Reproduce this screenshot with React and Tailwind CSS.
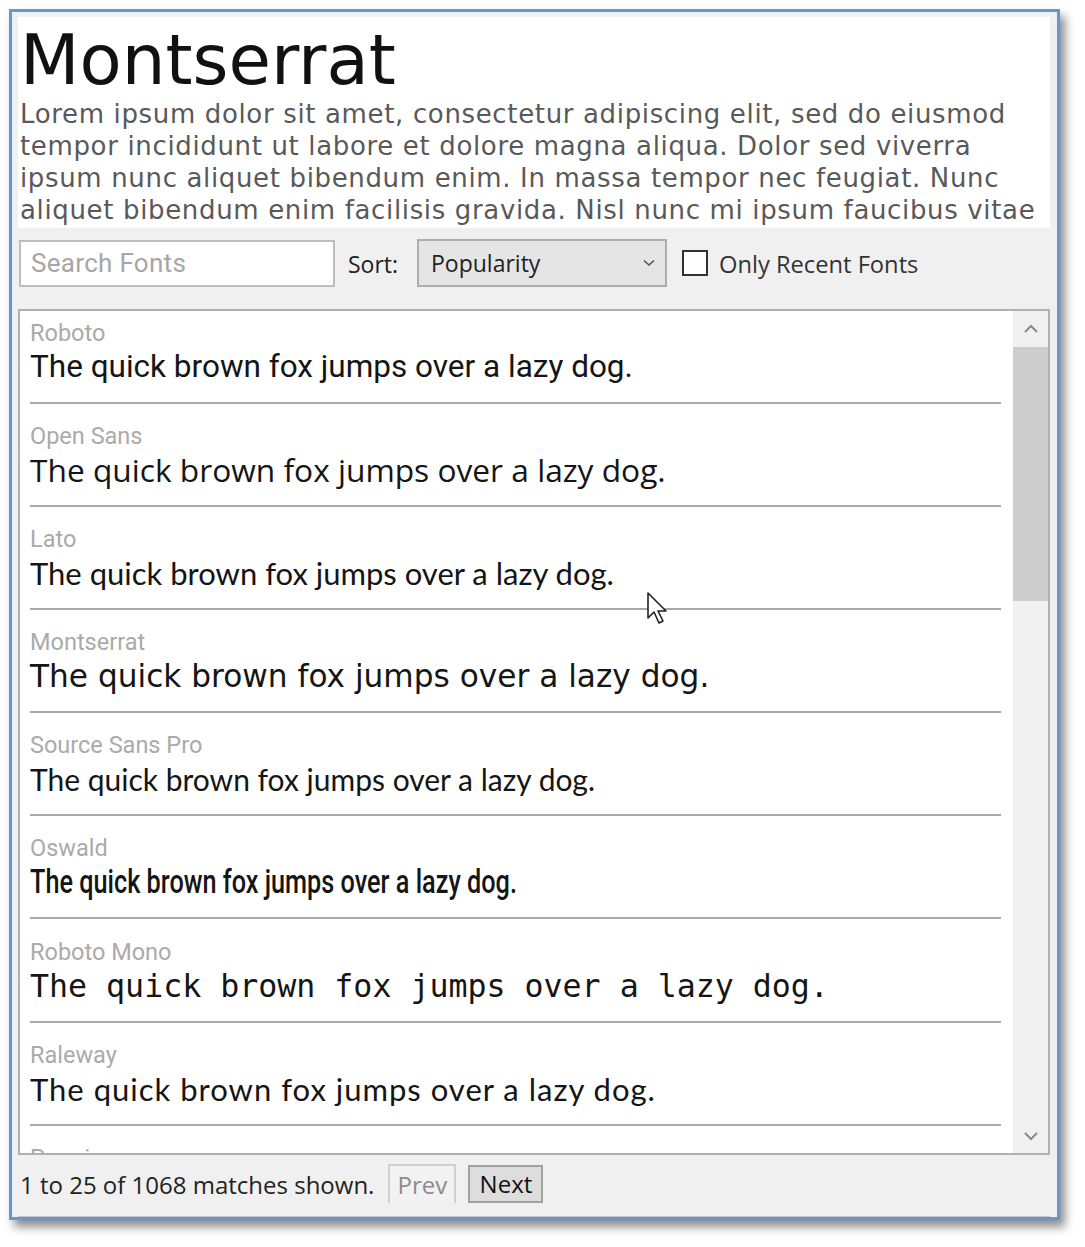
import React from "react";

const fonts = [
  { name: "Roboto", cls: "font-['Roboto'] text-[31.5px]" },
  { name: "Open Sans", cls: "font-['Open_Sans'] text-[31.7px]" },
  { name: "Lato", cls: "font-['Lato'] text-[31px]" },
  { name: "Montserrat", cls: "font-['DejaVu_Sans'] text-[31.2px]" },
  { name: "Source Sans Pro", cls: "font-['Lato'] text-[30px]" },
  { name: "Oswald", cls: "font-['Roboto'] font-medium text-[33px] inline-block origin-left scale-x-[0.765]" },
  { name: "Roboto Mono", cls: "font-['DejaVu_Sans_Mono',monospace] text-[31.6px]" },
  { name: "Raleway", cls: "font-['Lato'] text-[31px] tracking-[1px]" },
  { name: "Poppins", cls: "font-['Open_Sans'] text-[31px]", partial: true },
];

const lorem = [
  "Lorem ipsum dolor sit amet, consectetur adipiscing elit, sed do eiusmod",
  "tempor incididunt ut labore et dolore magna aliqua. Dolor sed viverra",
  "ipsum nunc aliquet bibendum enim. In massa tempor nec feugiat. Nunc",
  "aliquet bibendum enim facilisis gravida. Nisl nunc mi ipsum faucibus vitae",
];

function FontRow({ font, first }) {
  return (
    <div className={first ? "pt-[9px]" : "pt-[19.1px]"}>
      <div className="font-['Roboto'] text-[23.5px] leading-[26px] text-[#aaaaaa] whitespace-nowrap">
        {font.name}
      </div>
      {!font.partial && (
        <>
          <div className="mt-[1px] h-[40px] leading-[40px] whitespace-nowrap">
            <span className={`${font.cls} text-[#151515]`}>
              The quick brown fox jumps over a lazy dog.
            </span>
          </div>
          <div className="mt-[15px] h-[2px] bg-[#a9a9a9]" />
        </>
      )}
    </div>
  );
}

function Chevron({ up }) {
  return (
    <svg width="16" height="10" viewBox="0 0 16 10" fill="none" stroke="#8a8a8a" strokeWidth="2">
      {up ? <polyline points="2,8 8,2 14,8" /> : <polyline points="2,2 8,8 14,2" />}
    </svg>
  );
}

export default function App() {
  return (
    <div className="relative w-[1085px] h-[1247px] bg-white pt-[9px] pl-[9px] font-['Open_Sans',sans-serif]">
      <div className="w-[1051px] h-[1211px] border-[3px] border-[#5b9bd5] bg-[#f0f0f0] shadow-[5px_7px_9px_rgba(0,0,0,0.45)] overflow-hidden flex flex-col pl-[6px] pr-[7px] pt-[5px]">
        {/* Header preview */}
        <div className="h-[211px] shrink-0 bg-white overflow-hidden pl-[2px] pt-[7px] font-['DejaVu_Sans',sans-serif]">
          <div className="text-[69px] leading-[72px] text-[#111]">Montserrat</div>
          <div className="mt-[2px]">
            {lorem.map((line) => (
              <div key={line} className="text-[26px] leading-[32px] tracking-[0.65px] text-[#595959] whitespace-nowrap">
                {line}
              </div>
            ))}
          </div>
        </div>

        {/* Controls */}
        <div className="mt-[11px] h-[48px] shrink-0 flex items-center pl-[1px]">
          <div className="w-[316px] h-[47px] border-2 border-[#bdbdbd] bg-white flex items-center pl-[10px] font-['Roboto'] text-[26px] tracking-[0.3px] leading-[32px] text-[#a6a6a6]">
            Search Fonts
          </div>
          <div className="ml-[13px] w-[69px] pt-[2px] text-[23px] leading-[32px] text-[#222]">Sort:</div>
          <div className="w-[250px] h-[48px] border-2 border-[#adadad] bg-[#e5e5e5] flex items-center justify-between pl-[12px] pr-[10px] text-[23px] leading-[32px] text-[#222]">
            <span>Popularity</span>
            <svg width="12" height="8" viewBox="0 0 12 8" fill="none" stroke="#555" strokeWidth="1.6">
              <polyline points="1,1.5 6,6 11,1.5" />
            </svg>
          </div>
          <div className="ml-[15px] w-[26px] h-[26px] border-2 border-[#333] bg-white" />
          <div className="ml-[11px] pt-[2px] text-[23.7px] leading-[32px] text-[#333]">Only Recent Fonts</div>
        </div>

        {/* Font list */}
        <div className="mt-[22px] h-[846px] shrink-0 border-2 border-[#b0b0b0] bg-white flex">
          <div className="flex-1 overflow-hidden pl-[10px] pr-[12px]">
            {fonts.map((f, i) => (
              <FontRow key={f.name} font={f} first={i === 0} />
            ))}
          </div>
          <div className="w-[35px] bg-[#f0f0f0] flex flex-col">
            <div className="h-[36px] flex items-center justify-center">
              <Chevron up />
            </div>
            <div className="h-[254px] bg-[#cdcdcd]" />
            <div className="flex-1" />
            <div className="h-[34px] flex items-center justify-center">
              <Chevron />
            </div>
          </div>
        </div>

        {/* Footer */}
        <div className="mt-[9px] h-[39px] shrink-0 flex items-center pl-[2px] text-[24px] leading-[32px]">
          <span className="text-[#222] pt-[3px]">1 to 25 of 1068 matches shown.</span>
          <div className="ml-[14px] w-[68px] h-[39px] border-2 border-b-0 border-[#d0d0d0] bg-[#f2f2f2] flex items-center justify-center text-[#8c8c8c]">
            Prev
          </div>
          <div className="ml-[12px] w-[75px] h-[38px] border-2 border-[#a0a0a0] bg-[#dddddd] flex items-center justify-center text-[#111]">
            Next
          </div>
        </div>
        <div className="mt-auto h-[1px] bg-[#c6c6c6]" />
      </div>

      {/* Mouse cursor */}
      <svg className="absolute left-[647px] top-[592px]" width="22" height="34" viewBox="0 0 22 34">
        <path d="M1 1 L1 26 L7 20 L12 31 L16 29 L11 19 L19 19 Z" fill="#fff" stroke="#222" strokeWidth="1.6" strokeLinejoin="round" />
      </svg>
    </div>
  );
}
